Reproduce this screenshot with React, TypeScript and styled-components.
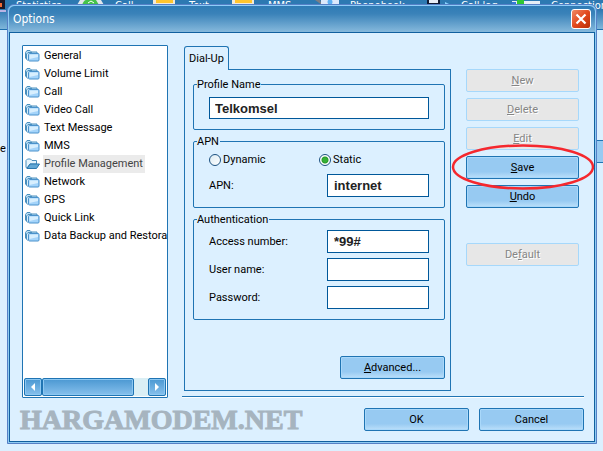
import React, { useState } from "react";
import styled, { createGlobalStyle, css } from "styled-components";

const ui = `Roboto, "DejaVu Sans Condensed", sans-serif`;
const line = "#1f74b3";
const fieldLine = "#00589a";
const paper = "#dcf0ff";

const GlobalStyle = createGlobalStyle`
  *, *::before, *::after { box-sizing: border-box; }
  body { margin: 0; background: ${paper}; }
  body, button, input { font: 11px/14px ${ui}; color: #000; }
`;

const Page = styled.div`
  position: relative;
  min-height: 100vh;
  padding: 4px 6px 7px 7px;
  overflow: hidden;
`;

const BackWindow = styled.div`
  position: absolute;
  inset: 0;
  overflow: hidden;
`;

const BackToolbar = styled.div`
  height: 30px;
  border-bottom: 1px solid #1c6fae;
  background: linear-gradient(#2d79b2 0 4px, #3079b3 10px, #7fb6da);
  color: #fff;
  overflow: hidden;
`;

const BackItems = styled.div`
  display: grid;
  grid-template-columns: 16px 99px 74px 79px 82px 111px 90px 80px;
  font: 11px/12px "DejaVu Sans Condensed", sans-serif;
  align-items: start;
  white-space: nowrap;
`;

const BackItem = styled.span`
  display: flex;
  justify-content: space-between;
  padding-right: 9px;
`;

const BackLabel = styled.span`
  position: absolute;
  left: 0;
  top: 142px;
`;

const BackButton = styled.span`
  position: absolute;
  right: 0;
  top: 140px;
  width: 8px;
  height: 23px;
  border: 1px solid ${line};
  border-right: 0;
  background: #97caf2;
`;

const Dialog = styled.main`
  position: relative;
  border: 1px solid #5680c6;
  border-radius: 7px 7px 0 0;
  background: #8fccf2;
  padding: 0 1px 1px;
`;

const TitleBar = styled.header`
  display: flex;
  align-items: center;
  justify-content: space-between;
  height: 27px;
  padding: 0 4px 0 4px;
  border-top: 1px solid #8fccf8;
  border-radius: 6px 6px 0 0;
  background: linear-gradient(#2f7cb5, #3a82b9 30%, #86b9dc);
`;

const Title = styled.h1`
  margin: 0;
  font: 12px/18px "DejaVu Sans Condensed", sans-serif;
  color: #fff;
`;

const CloseButton = styled.button`
  display: grid;
  place-items: center;
  width: 20px;
  height: 20px;
  padding: 0;
  border: 1px solid #fff;
  border-radius: 3px;
  background: linear-gradient(135deg, #f08a66, #e2491d 50%, #b92e08);
`;

const Body = styled.div`
  border: 1px solid #10609f;
  background: ${paper};
`;

const Columns = styled.div`
  display: grid;
  grid-template-columns: 146px minmax(0, 1fr);
  column-gap: 14px;
  padding: 12px 10px 0 12px;
`;

const TreeBox = styled.nav`
  display: flex;
  flex-direction: column;
  justify-content: space-between;
  border: 1px solid ${line};
  border-radius: 1px;
  background: #fff;
  padding: 1px;
  overflow: hidden;
`;

const TreeList = styled.ul`
  margin: 0;
  padding: 0;
  list-style: none;
`;

const TreeItem = styled.li`
  display: flex;
  align-items: center;
  gap: 3px;
  height: 18px;
  padding-left: 1px;
  white-space: nowrap;
  svg { flex: none; }
`;

const TreeLink = styled.a<{ $active?: boolean }>`
  padding: 0 2px 0 1px;
  line-height: 18px;
  text-decoration: none;
  color: ${(p) => (p.$active ? "#444" : "#000")};
  background: ${(p) => (p.$active ? "#ebebeb" : "transparent")};
`;

const ScrollBar = styled.div`
  display: grid;
  grid-template-columns: 18px 92px 1fr 18px;
  height: 18px;
  background: #daeff5;
`;

const scrollPart = css`
  display: grid;
  place-items: center;
  padding: 0;
  border: 1px solid ${line};
  border-radius: 2px;
  box-shadow: inset 0 0 0 1px #8cc8f2;
  background: linear-gradient(#4b98d2, #86c0ec);
`;

const ScrollButton = styled.button`
  ${scrollPart}
`;

const ScrollThumb = styled.div`
  ${scrollPart}
`;

const Settings = styled.div`
  display: flex;
  flex-direction: column;
`;

const SettingsRow = styled.div`
  display: flex;
  gap: 15px;
  padding: 1px 5px 0 2px;
`;

const TabArea = styled.section`
  flex: 1;
  min-width: 0;
  display: flex;
  flex-direction: column;
  align-items: flex-start;
`;

const Tab = styled.button`
  position: relative;
  z-index: 1;
  height: 24px;
  margin-bottom: -1px;
  padding: 0 4px;
  border: 1px solid ${line};
  border-bottom: 0;
  border-radius: 3px 3px 0 0;
  background: ${paper};
`;

const TabPanel = styled.form`
  align-self: stretch;
  display: flex;
  flex-direction: column;
  gap: 5px;
  height: 322px;
  padding: 8px 5px 11px 8px;
  border: 1px solid ${line};
`;

const Group = styled.fieldset`
  display: grid;
  gap: 5px;
  min-width: 0;
  margin: 0;
  padding: 4px 15px 10px;
  border: 1px solid ${line};
  border-radius: 2px;
`;

const Legend = styled.legend`
  margin-left: -12px;
  padding: 0 1px 0 0;
  line-height: 13px;
`;

const ProfileInput = styled.input`
  width: 100%;
  height: 22px;
  margin-top: 2px;
  padding: 0 5px;
  border: 1px solid ${fieldLine};
  background: #fff;
  font: bold 13px/18px "Liberation Sans", sans-serif;
  color: #222;
`;

const FieldInput = styled(ProfileInput)`
  height: 23px;
  margin-top: 0;
  padding: 0 6px;
`;

const FieldRow = styled.div`
  display: grid;
  grid-template-columns: 118px minmax(0, 1fr);
  align-items: center;
`;

const RadioRow = styled.div`
  display: grid;
  grid-template-columns: 110px 1fr;
  height: 16px;
  margin-bottom: 1px;
`;

const RadioLabel = styled.label`
  display: flex;
  align-items: center;
  gap: 2px;
`;

const Radio = styled.input`
  appearance: none;
  width: 12px;
  height: 12px;
  margin: 0;
  border: 1px solid #1c5180;
  border-radius: 50%;
  background: linear-gradient(135deg, #dcebf2, #fff);
  &:checked {
    background: radial-gradient(circle, #35b035 0 2px, #2a9a2a 3px, #fff 4px);
  }
`;

const Button = styled.button`
  flex: none;
  width: 113px;
  height: 23px;
  padding: 0;
  border: 1px solid ${line};
  border-radius: 2px;
  background: linear-gradient(#97caf2 0 70%, #bce0fa);
  box-shadow: inset 0 0 0 1px #a9d8fa;
  &:disabled {
    border-color: #a6d8fb;
    background: #e7e7e7;
    box-shadow: none;
    color: #858585;
    text-shadow: 1px 1px 0 #fff;
  }
`;

const DialogButton = styled(Button)`
  width: 105px;
`;

const AdvancedButton = styled(DialogButton)`
  align-self: flex-end;
  margin-top: auto;
`;

const Actions = styled.div`
  display: flex;
  flex-direction: column;
  gap: 6px;
  padding-top: 23px;
`;

const SaveSlot = styled.div`
  position: relative;
  height: 23px;
`;

const Highlight = styled.svg`
  position: absolute;
  left: -15px;
  top: -13px;
  pointer-events: none;
  z-index: 2;
`;

const DefaultSlot = styled.div`
  margin-top: 29px;
`;

const Divider = styled.hr`
  width: 100%;
  margin: 5px 0 0;
  border: 0;
  border-top: 1px solid ${line};
  border-bottom: 1px solid #fff;
`;

const Footer = styled.footer`
  display: flex;
  align-items: center;
  gap: 10px;
  padding: 0 10px;
  height: 43px;
`;

const Brand = styled.span`
  flex: 1;
  min-width: 0;
  font: bold 28px/40px "Liberation Serif", serif;
  color: #a6b4bf;
  -webkit-text-stroke: 1px #a6b4bf;
`;

const tree = [
  "General", "Volume Limit", "Call", "Video Call", "Text Message", "MMS",
  "Profile Management", "Network", "GPS", "Quick Link", "Data Backup and Restora",
];

function Folder({ open }: { open?: boolean }) {
  return (
    <svg width="15" height="14" viewBox="0 0 15 14" aria-hidden="true">
      {open ? (
        <>
          <path d="M1 10.5V3.5L2.5 2H5.5L7 3.5H11.5V7H5L2 11Z" fill="#e4f4fd" stroke="#4a8fbd" />
          <path d="M2 11.5L5 7H14.5L11.5 11.5Z" fill="#62a8d6" stroke="#2b78ae" />
        </>
      ) : (
        <>
          <path d="M.5 9.500V3.500L2 1.500H5L6.500 3H12V4.500" fill="#b7ddf5" stroke="#4a8fbd" />
          <path d="M2.500 11.500L1.500 10V5L3 3.500H7" fill="#d4edfb" stroke="#4a8fbd" />
          <rect x="3.500" y="4.500" width="10.500" height="7.500" rx="1" fill="#a4d4fa" stroke="#4b92cc" />
          <path d="M4.500 6V5.500H13V8L4.500 10Z" fill="#d8effe" />
        </>
      )}
    </svg>
  );
}

function Arrow({ left }: { left?: boolean }) {
  return (
    <svg width="8" height="8" viewBox="0 0 8 8" aria-hidden="true">
      <path d={left ? "M6 0V8L2 4Z" : "M2 0V8L6 4Z"} fill="#fff" />
    </svg>
  );
}

function ToolIcon({ kind }: { kind: string }) {
  return (
    <svg width="30" height="12" viewBox="0 0 30 12" aria-hidden="true">
      {kind === "call" && <><path d="M1 5L4 0H25L28 5Z" fill="#e2e6ea" /><path d="M6 5Q8 0 10 0H20L23 5Z" fill="#45c34a" /><path d="M12 3L15 1L18 3" stroke="#fff" fill="none" /></>}
      {kind === "mail" && <><path d="M3 5V0H25V5Z" fill="#f2ead8" /><path d="M6 0H23V3H6Z" fill="#ffc52e" /></>}
      {kind === "book" && <><path d="M4 0H9L11 5Z" fill="#7d7f85" /><path d="M10 0H28V5H10Z" fill="#dce9fb" /><circle cx="19" cy="2" r="2.500" fill="#5db0f2" /></>}
      {kind === "log" && <><path d="M5 0H18V5H5Z" fill="#111a33" /><path d="M7 0H16V3H7Z" fill="#e9edf5" /><path d="M23 2L27 4L23 5Z" fill="#8ad2ff" /></>}
      {kind === "net" && <><path d="M0 1H28V5H0Z" fill="#e6eef5" /><path d="M5 0H12V4H5Z" fill="#2fc832" /><path d="M0 2H4V5H0Z" fill="#3478d8" /></>}
    </svg>
  );
}

const toolbar = [
  ["Statistics", "call"], ["Call", "mail"], ["Text", "mail"], ["MMS", "book"],
  ["Phonebook", "log"], ["Call log", "net"], ["Connection", ""],
];

export default function App() {
  const [mode, setMode] = useState("static");
  return (
    <Page>
      <GlobalStyle />
      <BackWindow aria-hidden="true">
        <BackToolbar>
          <BackItems>
            <svg width="6" height="12" viewBox="0 0 6 12"><path d="M0 0H5V9H0Z" fill="#1c1626" /><path d="M0 3H2V7H0Z" fill="#f06a35" /><path d="M0 10H6V12H0Z" fill="#b9b4e4" /></svg>
            {toolbar.map(([name, icon]) => (
              <BackItem key={name}>{name}{icon && <ToolIcon kind={icon} />}</BackItem>
            ))}
          </BackItems>
        </BackToolbar>
        <BackLabel>e</BackLabel>
        <BackButton />
      </BackWindow>
      <Dialog>
        <TitleBar>
          <Title>Options</Title>
          <CloseButton aria-label="Close">
            <svg width="12" height="12" viewBox="0 0 12 12" aria-hidden="true">
              <path d="M1.500 1.500L10.500 10.500M10.500 1.500L1.500 10.500" stroke="#fff" strokeWidth="2.200" />
            </svg>
          </CloseButton>
        </TitleBar>
        <Body>
          <Columns>
            <TreeBox aria-label="Option categories">
              <TreeList>
                {tree.map((name) => (
                  <TreeItem key={name}>
                    <Folder open={name === "Profile Management"} />
                    <TreeLink href="#" $active={name === "Profile Management"}>{name}</TreeLink>
                  </TreeItem>
                ))}
              </TreeList>
              <ScrollBar>
                <ScrollButton aria-label="Scroll left"><Arrow left /></ScrollButton>
                <ScrollThumb />
                <span />
                <ScrollButton aria-label="Scroll right"><Arrow /></ScrollButton>
              </ScrollBar>
            </TreeBox>
            <Settings>
              <SettingsRow>
                <TabArea>
                  <Tab type="button">Dial-Up</Tab>
                  <TabPanel onSubmit={(e) => e.preventDefault()}>
                    <Group>
                      <Legend>Profile Name</Legend>
                      <ProfileInput aria-label="Profile Name" defaultValue="Telkomsel" />
                    </Group>
                    <Group>
                      <Legend>APN</Legend>
                      <RadioRow>
                        <RadioLabel>
                          <Radio type="radio" name="mode" checked={mode === "dynamic"} onChange={() => setMode("dynamic")} />
                          Dynamic
                        </RadioLabel>
                        <RadioLabel>
                          <Radio type="radio" name="mode" checked={mode === "static"} onChange={() => setMode("static")} />
                          Static
                        </RadioLabel>
                      </RadioRow>
                      <FieldRow>
                        <label htmlFor="apn">APN:</label>
                        <FieldInput id="apn" defaultValue="internet" />
                      </FieldRow>
                    </Group>
                    <Group>
                      <Legend>Authentication</Legend>
                      <FieldRow>
                        <label htmlFor="access">Access number:</label>
                        <FieldInput id="access" defaultValue="*99#" />
                      </FieldRow>
                      <FieldRow>
                        <label htmlFor="user">User name:</label>
                        <FieldInput id="user" />
                      </FieldRow>
                      <FieldRow>
                        <label htmlFor="password">Password:</label>
                        <FieldInput id="password" type="password" />
                      </FieldRow>
                    </Group>
                    <AdvancedButton type="button"><u>A</u>dvanced...</AdvancedButton>
                  </TabPanel>
                </TabArea>
                <Actions>
                  <Button disabled><u>N</u>ew</Button>
                  <Button disabled><u>D</u>elete</Button>
                  <Button disabled><u>E</u>dit</Button>
                  <SaveSlot>
                    <Button><u>S</u>ave</Button>
                    <Highlight width="144" height="48" viewBox="0 0 144 48" aria-hidden="true">
                      <ellipse cx="72" cy="24" rx="70" ry="21.500" fill="none" stroke="#f5282e" strokeWidth="2.500" />
                    </Highlight>
                  </SaveSlot>
                  <Button><u>U</u>ndo</Button>
                  <DefaultSlot><Button disabled>De<u>f</u>ault</Button></DefaultSlot>
                </Actions>
              </SettingsRow>
              <Divider />
            </Settings>
          </Columns>
          <Footer>
            <Brand>HARGAMODEM.NET</Brand>
            <DialogButton>OK</DialogButton>
            <DialogButton>Cancel</DialogButton>
          </Footer>
        </Body>
      </Dialog>
    </Page>
  );
}
